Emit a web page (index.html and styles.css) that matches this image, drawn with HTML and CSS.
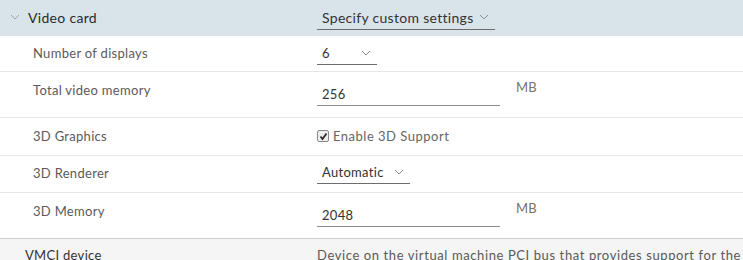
FILE: index.html
```html
<!DOCTYPE html>
<html>
<head>
<meta charset="utf-8">
<link rel="stylesheet" href="styles.css">
</head>
<body>
<div class="grid">
  <div class="row head">
    <div class="label head-label">
      <svg class="caret" width="10" height="6" viewBox="0 0 10 6"><path d="M1 1 L5 5 L9 1" fill="none" stroke="#9aa3a8" stroke-width="1"/></svg>
      <span>Video card</span>
    </div>
    <div class="value">
      <div class="select sel-wide"><span>Specify custom settings</span><svg width="10" height="6" viewBox="0 0 10 6"><path d="M1 1 L5 5 L9 1" fill="none" stroke="#8a8f93" stroke-width="1"/></svg></div>
    </div>
  </div>
  <div class="row r-disp">
    <div class="label sub">Number of displays</div>
    <div class="value">
      <div class="select sel-num"><span>6</span><svg width="10" height="6" viewBox="0 0 10 6"><path d="M1 1 L5 5 L9 1" fill="none" stroke="#8a8f93" stroke-width="1"/></svg></div>
    </div>
  </div>
  <div class="row r-mem">
    <div class="label sub">Total video memory</div>
    <div class="value">
      <div class="input"><span>256</span></div><span class="unit">MB</span>
    </div>
  </div>
  <div class="row r-3d">
    <div class="label sub">3D Graphics</div>
    <div class="value">
      <label class="check"><span class="box"><svg width="9" height="9" viewBox="0 0 9 9"><path d="M1.5 4.5 L3.5 7 L7.5 1.5" fill="none" stroke="#2b2b2b" stroke-width="1.8"/></svg></span>Enable 3D Support</label>
    </div>
  </div>
  <div class="row r-rend">
    <div class="label sub">3D Renderer</div>
    <div class="value">
      <div class="select sel-auto"><span>Automatic</span><svg width="10" height="6" viewBox="0 0 10 6"><path d="M1 1 L5 5 L9 1" fill="none" stroke="#8a8f93" stroke-width="1"/></svg></div>
    </div>
  </div>
  <div class="row r-mem last">
    <div class="label sub">3D Memory</div>
    <div class="value">
      <div class="input"><span>2048</span></div><span class="unit">MB</span>
    </div>
  </div>
  <div class="row vmci">
    <div class="label vm">VMCI device</div>
    <div class="value desc">Device on the virtual machine PCI bus that provides support for the virtual machine communication interface</div>
  </div>
</div>
</body>
</html>
```
FILE: styles.css
```css
html, body { margin: 0; padding: 0; background: #fff; overflow: hidden; }
body { font-family: Lato, "Liberation Sans", sans-serif; font-size: 13px; letter-spacing: 0.3px; color: #3a3a3a; width: 743px; height: 260px; }
.grid { display: flex; flex-direction: column; }
.row { display: flex; border-bottom: 1px solid #e8e8e8; box-sizing: border-box; }
.label { width: 317px; box-sizing: border-box; }
.value { flex: 1; display: flex; align-items: flex-start; min-width: 0; }
.head { background: #d9e4ea; height: 36px; border-bottom: none; }
.head-label { display: flex; align-items: center; padding-left: 10px; font-size: 14px; color: #2a2a2a; height: 36px; padding-bottom: 2px; box-sizing: border-box; }
.caret { margin-right: 8px; }
.head .value { align-items: flex-start; padding-top: 8px; }
.select { display: flex; align-items: center; justify-content: space-between; border-bottom: 1px solid #6d6d6d; height: 21px; box-sizing: border-box; padding: 0 6px 3px 5px; font-size: 13px; color: #333; }
.sel-wide { width: 178px; font-size: 14px; height: 22px; }
.sel-num { width: 60px; }
.sel-auto { width: 93px; }
.sub { padding-left: 33px; color: #5a5a5a; }
.r-disp { height: 36px; }
.r-disp .label { padding-top: 9px; }
.r-disp .value { padding-top: 8px; }
.r-mem { height: 46px; }
.r-mem .label { padding-top: 10px; }
.r-mem .value { padding-top: 14px; }
.input { width: 183px; border-bottom: 1px solid #8b8b8b; height: 20px; box-sizing: border-box; padding-left: 5px; color: #333; }
.unit { margin-left: 16px; margin-top: -7px; color: #737373; font-size: 13px; }
.r-3d { height: 38px; }
.r-3d .label { padding-top: 10px; }
.r-3d .value { padding-top: 10px; }
.check { display: flex; align-items: center; color: #666; letter-spacing: 0.5px; }
.box { width: 10px; height: 10px; border: 1px solid #8a8a8a; border-radius: 2px; background: #eee; margin-right: 4px; display: flex; align-items: center; justify-content: center; }
.r-rend { height: 37px; }
.r-rend .label { padding-top: 9px; }
.r-rend .value { padding-top: 7px; }
.last { border-bottom: 1px solid #d0d0d0; }
.vmci { background: #f5f5f5; height: 40px; border-bottom: none; }
.vm { padding-left: 25px; padding-top: 8px; color: #333; }
.desc { padding-top: 8px; white-space: nowrap; overflow: hidden; color: #5a5a5a; letter-spacing: 0.6px; }
```
